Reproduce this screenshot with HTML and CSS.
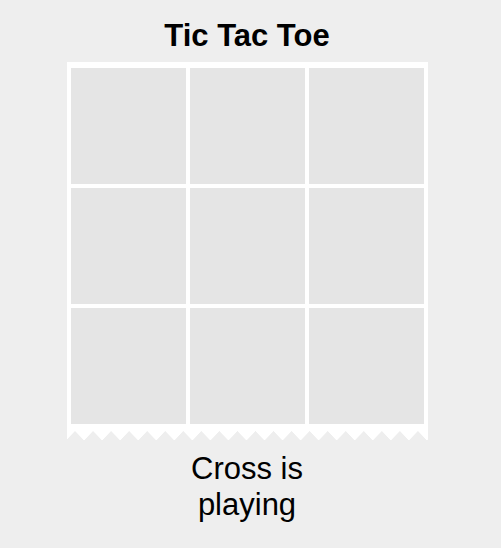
FILE: index.html
```html
<!DOCTYPE html>
<html lang="en">
<head>
    <meta charset="UTF-8">
    <meta name="viewport" content="width=device-width, initial-scale=1.0">
    <title>Tic Tac Toe</title>
    <link rel="stylesheet" href="styles.css">
</head>
<body>

    <main class="game">
        <h1 class="title">Tic Tac Toe</h1>

        <div class="board">
            <div class="grid">
                <div class="cell"></div>
                <div class="cell"></div>
                <div class="cell"></div>
                <div class="cell"></div>
                <div class="cell"></div>
                <div class="cell"></div>
                <div class="cell"></div>
                <div class="cell"></div>
                <div class="cell"></div>
            </div>
            <div class="edge"></div>
        </div>

        <p class="status">Cross is playing</p>
    </main>

</body>
</html>
```

FILE: styles.css
```css
body {
    font-family: 'Liberation Sans', Arial, Helvetica, sans-serif;
    background-color: #eeeeee;
    color: #000;
    margin: 0;
    padding: 18px 7px 0 0;
}
.game {
    display: flex;
    flex-direction: column;
    align-items: center;
}
.title {
    font-size: 31px;
    font-weight: bold;
    line-height: normal;
    margin: 0 0 8px;
}
.board {
    width: 361px;
    display: flex;
    flex-direction: column;
}
.grid {
    display: grid;
    grid-template-columns: repeat(3, 115px);
    grid-template-rows: repeat(3, 116px);
    gap: 4px;
    background-color: #fff;
    padding: 6px 4px 7px;
}
.cell {
    background-color: #e5e5e5;
}
/* torn paper edge under the board */
.edge {
    height: 9px;
    background: conic-gradient(from 135deg at 50% 0, transparent 90deg, #fff 0deg) -1px 0 / calc(100% / 20) 100%;
}
.status {
    width: 140px;
    margin: 11px 0 0;
    font-size: 31px;
    line-height: 36px;
    text-align: center;
}
```
